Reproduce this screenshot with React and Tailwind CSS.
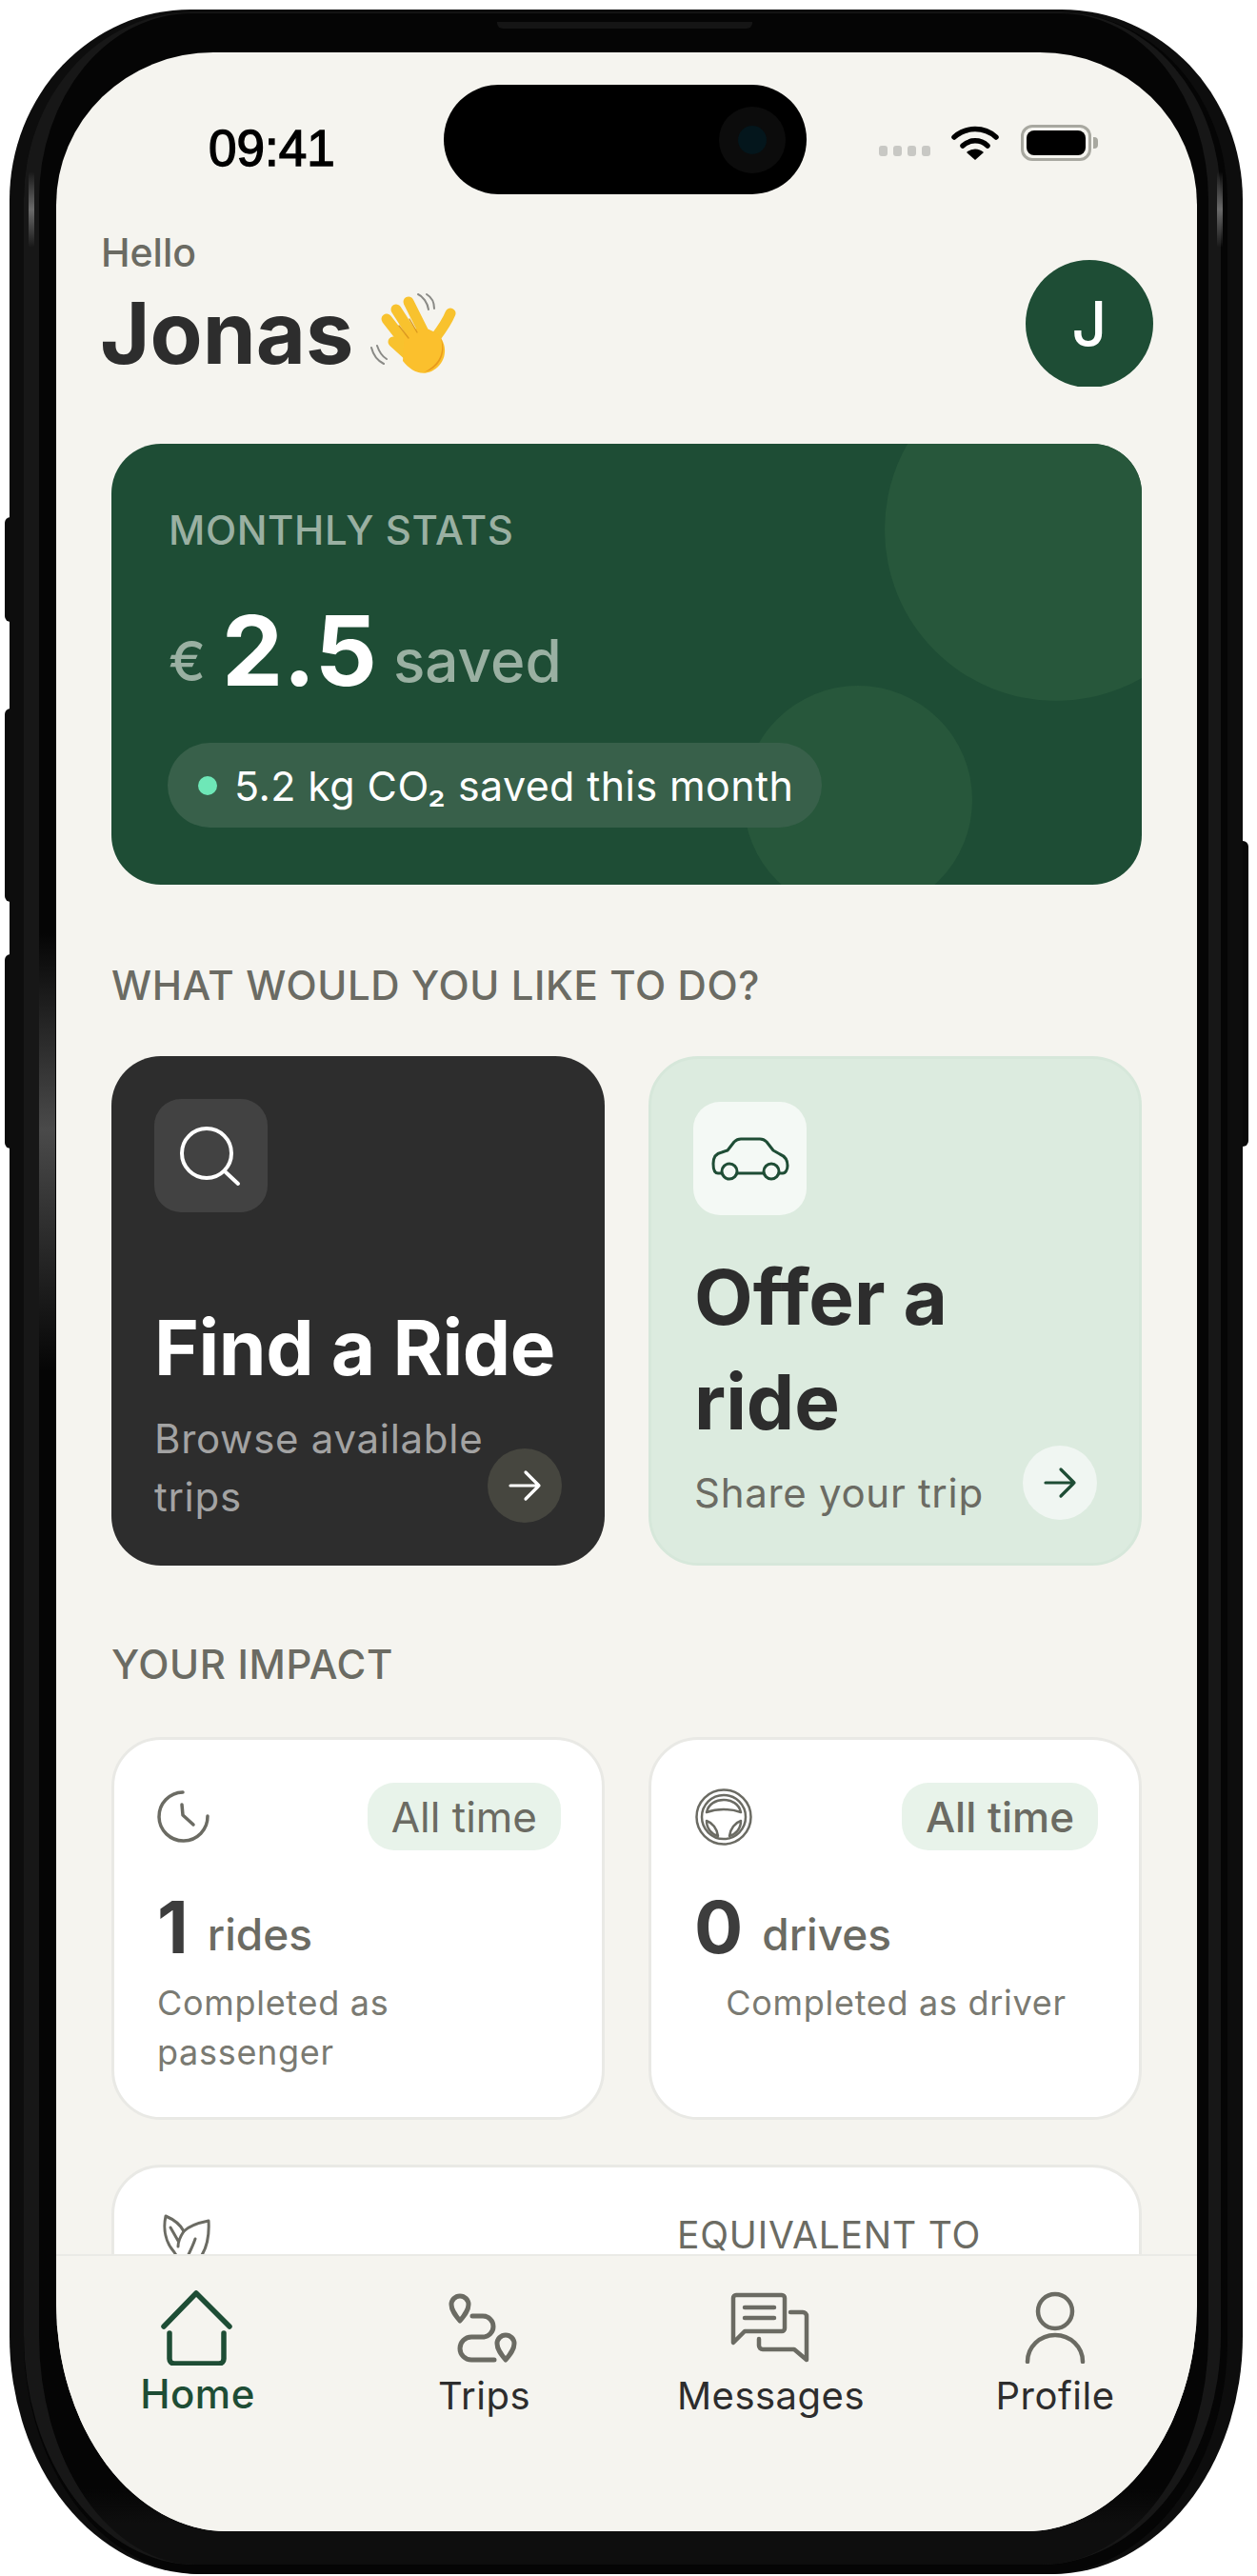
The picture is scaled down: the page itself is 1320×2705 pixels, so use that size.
import React from "react";

const Arrow = ({ color }) => (
  <svg width="78" height="78" viewBox="0 0 78 78" fill="none" stroke={color} strokeWidth="3.2" strokeLinecap="round" strokeLinejoin="round">
    <path d="M24 39H54M40 25L54 39L40 53" />
  </svg>
);

const Hand = () => (
  <svg width="90" height="90" viewBox="0 0 90 90" fill="none" strokeLinecap="round" className="ml-[18px] shrink-0">
    <path d="M50 4C55 6 60 13 61 20M59 4C64 7 67 13 67 19" stroke="#8a8a86" strokeWidth="2" />
    <path d="M1 60C3 68 8 74 14 77M7 58C9 64 12 69 17 72" stroke="#8a8a86" strokeWidth="2" />
    <g stroke="#f8c22e" strokeWidth="11">
      <path d="M17 30L42 62" />
      <path d="M27 20L50 56" />
      <path d="M40 12L60 52" />
      <path d="M24 54L46 74" />
      <path d="M84 24C80 34 74 42 68 50" />
    </g>
    <path d="M36 46C48 36 64 38 74 50C82 62 78 78 64 85C52 90 42 84 34 74Z" fill="#fbc02d" />
    <path d="M62 84C74 78 80 64 74 50C78 66 72 78 56 86Z" fill="#e99a1c" />
    <path d="M30 37L40 50M41 30L49 44" stroke="#dc9a1e" strokeWidth="1.4" />
  </svg>
);

const Section = ({ children }) => (
  <div className="text-[42px] leading-[48px] font-medium tracking-[0.6px] text-[#6b6b63] uppercase">{children}</div>
);

const ImpactCard = ({ icon, num, unit, children, center, strong }) => (
  <div className="h-[402px] rounded-[52px] border-[3px] border-[#e9e9e5] bg-white pl-[45px] pr-[43px] pt-[45px]">
    <div className="flex h-[71px] items-center justify-between">
      {icon}
      <div className={`flex h-[71px] items-center rounded-[28px] bg-[#e8f3ea] px-[25px] text-[44px] leading-[48px] text-[#6b6b63] ${strong ? "font-medium" : ""}`}>All time</div>
    </div>
    <div className="mt-[42px] flex items-end gap-[20px]">
      <span className="text-[76px] leading-[76px] font-bold text-[#3d3d3d]">{num}</span>
      <span className="text-[46px] leading-[60px] font-medium text-[#6b6b63]">{unit}</span>
    </div>
    <div className={`mt-[16px] text-[36px] leading-[52px] tracking-[0.7px] text-[#7a7a72] ${center ? "text-center" : ""}`}>{children}</div>
  </div>
);

const NavItem = ({ label, active, children }) => (
  <div className="flex flex-col items-center">
    <div className="flex h-[80px] items-center justify-center">{children}</div>
    <div className={active ? "mt-[6px] text-[42px] leading-[48px] font-medium tracking-[0.5px] text-[#1e4d35]" : "mt-[8px] text-[40px] leading-[48px] tracking-[0.5px] text-[#2d2d2d]"}>{label}</div>
  </div>
);

export default function App() {
  return (
    <div className="relative h-[2705px] w-[1320px] overflow-hidden bg-white font-[Inter,sans-serif]">
      <div className="absolute left-[5px] top-[543px] h-[110px] w-[12px] rounded-l-[6px] bg-[#0a0a0a]" />
      <div className="absolute left-[5px] top-[744px] h-[203px] w-[12px] rounded-l-[6px] bg-[#0a0a0a]" />
      <div className="absolute left-[5px] top-[1002px] h-[204px] w-[12px] rounded-l-[6px] bg-[#0a0a0a]" />
      <div className="absolute left-[1300px] top-[883px] h-[321px] w-[11px] rounded-r-[6px] bg-[#0a0a0a]" />

      <div className="relative ml-[10px] mt-[10px] h-[2693px] w-[1295px] rounded-[190px_190px_200px_200px/200px_200px_250px_250px] bg-[#0d0d0d] pl-[15px] pr-[16px] pt-[3px]">
        <div className="h-full w-full rounded-[178px_176px_190px_188px/197px_197px_246px_246px] bg-[#050505] pb-[10px] pr-[7px]">
          <div className="h-full w-full rounded-[176px_168px_190px_180px/196px_196px_240px_240px] bg-[#171717] pl-[16px] pr-[13px] pt-[1px]">
            <div className="h-full w-full rounded-[160px_155px_175px_165px/195px_195px_240px_240px] bg-[linear-gradient(#050505_97%,#0e0e0e_98.4%)] pb-[35px] pl-[18px] pr-[12px] pt-[41px]">
              <div className="relative flex h-full w-full flex-col overflow-hidden rounded-[165px_165px_180px_180px/160px_160px_240px_240px] bg-[#f5f4ef]">
                <div className="absolute left-[407px] top-[34px] flex h-[115px] w-[381px] items-center justify-end rounded-[58px] bg-black pr-[22px]">
                  <div className="flex h-[70px] w-[70px] items-center justify-center rounded-full bg-[#0c0c0c]">
                    <div className="h-[30px] w-[30px] rounded-full bg-[#04161c]" />
                  </div>
                </div>

                {/* status bar */}
                <div className="flex h-[185px] shrink-0 items-start justify-between pl-[160px] pr-[104px] pt-[76px]">
                  <div className="font-['Liberation_Sans',sans-serif] text-[53px] leading-[50px] text-black [-webkit-text-stroke:1.4px_black]">09:41</div>
                  <div className="flex items-end">
                    <div className="mb-[5px] flex gap-[6px]">
                      <div className="h-[11px] w-[9px] rounded-[3px] bg-[#c8c8c4]" />
                      <div className="h-[11px] w-[9px] rounded-[3px] bg-[#c8c8c4]" />
                      <div className="h-[11px] w-[9px] rounded-[3px] bg-[#c8c8c4]" />
                      <div className="h-[11px] w-[9px] rounded-[3px] bg-[#c8c8c4]" />
                    </div>
                    <svg width="50" height="38" viewBox="0 0 50 38" className="ml-[22px]" fill="none" stroke="black" strokeWidth="5.5" strokeLinecap="round">
                      <path d="M3 13A33 33 0 0 1 47 13" />
                      <path d="M12 22A19 19 0 0 1 38 22" />
                      <path d="M25 37L16 29A13 13 0 0 1 34 29Z" fill="black" stroke="none" />
                    </svg>
                    <div className="ml-[23px] flex h-[38px] w-[74px] items-center justify-center rounded-[12px] border-[3px] border-[#a8a8a0]">
                      <div className="h-[26px] w-[62px] rounded-[8px] bg-black" />
                    </div>
                    <div className="mb-[13px] ml-[2px] h-[12px] w-[5px] rounded-r-[4px] bg-[#a8a8a0]" />
                  </div>
                </div>

                {/* header */}
                <div className="flex h-[166px] shrink-0 items-start justify-between pl-[46px] pr-[46px]">
                  <div>
                    <div className="ml-[1px] mt-[1px] text-[41px] leading-[48px] font-medium text-[#6b6b63]">Hello</div>
                    <div className="mt-[16px] flex items-center">
                      <span className="text-[90px] leading-[88px] font-bold text-[#2d2d2d]">Jonas</span>
                      <Hand />
                    </div>
                  </div>
                  <div className="mt-[33px] h-[133px] w-[134px] overflow-hidden">
                    <div className="flex h-[134px] w-[134px] items-center justify-center rounded-full bg-[#1e4d35] text-[64px] font-medium text-white">J</div>
                  </div>
                </div>

                {/* main */}
                <div className="min-h-0 flex-1 overflow-hidden px-[58px] pt-[60px]">
                  <div className="relative h-[463px] overflow-hidden rounded-[52px] bg-[#1e4d35] pl-[60px] pt-[67px]">
                    <div className="absolute left-[812px] top-[-90px] h-[360px] w-[360px] rounded-full bg-[#27573b]" />
                    <div className="absolute left-[664px] top-[254px] h-[240px] w-[240px] rounded-full bg-[#27573b]" />
                    <div className="relative text-[42px] leading-[48px] font-medium tracking-[0.6px] text-[#9ab0a2]">MONTHLY STATS</div>
                    <div className="relative mt-[52px] flex items-end">
                      <span className="text-[58px] leading-[78px] font-medium text-[#9ab0a2]">€</span>
                      <span className="ml-[17px] text-[102px] leading-[100px] font-bold text-white">2.5</span>
                      <span className="ml-[17px] text-[62px] leading-[78px] font-medium text-[#9ab0a2]">saved</span>
                    </div>
                    <div className="relative -ml-[1px] mt-[47px] inline-flex h-[89px] items-center rounded-full bg-[#38604a] pl-[32px] pr-[30px]">
                      <div className="h-[20px] w-[20px] rounded-full bg-[#6ee7b7]" />
                      <span className="ml-[18px] text-[43px] leading-[48px] tracking-[0.4px] text-white">5.2 kg CO₂ saved this month</span>
                    </div>
                  </div>

                  <div className="mt-[82px]">
                    <Section>What would you like to do?</Section>
                  </div>

                  <div className="mt-[50px] grid grid-cols-2 gap-[46px]">
                    <div className="relative flex h-[535px] flex-col rounded-[52px] bg-[#2d2d2d] pb-[42px] pl-[45px] pt-[45px]">
                      <div className="h-[119px] w-[119px] rounded-[28px] bg-[#424242]">
                        <svg width="119" height="119" viewBox="0 0 119 119" fill="none" stroke="white" strokeWidth="4" strokeLinecap="round">
                          <circle cx="55" cy="57" r="26" />
                          <path d="M74 76L88 89" />
                        </svg>
                      </div>
                      <div className="mt-auto whitespace-nowrap text-[80px] leading-[110px] font-bold tracking-[-0.4px] text-white">Find a Ride</div>
                      <div className="mt-[10px] text-[42px] leading-[61px] tracking-[0.7px] text-[#a3a3a3]">Browse available<br />trips</div>
                      <div className="absolute bottom-[45px] right-[45px] h-[78px] w-[78px] rounded-full bg-[#46463f]">
                        <Arrow color="white" />
                      </div>
                    </div>
                    <div className="relative flex h-[535px] flex-col rounded-[52px] border-[3px] border-[#d6e7da] bg-[#dcebdf] pb-[43px] pl-[44px] pt-[45px]">
                      <div className="h-[119px] w-[119px] rounded-[28px] bg-[#f4f9f5]">
                        <svg width="119" height="119" viewBox="0 0 119 119" fill="none" stroke="#1e4d35" strokeWidth="3" strokeLinecap="round" strokeLinejoin="round">
                          <path d="M30 75H26C22 75 21 71 21 65C21 58 24 54 30 53L36 51L43 42C45 40 47 39 50 39H70C73 39 75 40 77 42L84 51L91 55C96 57 99 61 99 67C99 71 97 75 94 75H90" />
                          <path d="M46 75H74" />
                          <circle cx="38" cy="73" r="8" />
                          <circle cx="82" cy="73" r="8" />
                        </svg>
                      </div>
                      <div className="ml-[1px] mt-auto text-[80px] leading-[110px] font-bold text-[#2d2d2d]">Offer a<br />ride</div>
                      <div className="ml-[1px] mt-[10px] text-[42px] leading-[61px] tracking-[0.7px] text-[#6b6b63]">Share your trip</div>
                      <div className="absolute bottom-[45px] right-[44px] h-[78px] w-[78px] rounded-full bg-[#f0f6f2]">
                        <Arrow color="#1e4d35" />
                      </div>
                    </div>
                  </div>

                  <div className="mt-[80px]">
                    <Section>Your impact</Section>
                  </div>

                  <div className="mt-[52px] grid grid-cols-2 gap-[46px]">
                    <ImpactCard
                      num="1"
                      unit="rides"
                      icon={
                        <svg width="56" height="56" viewBox="0 0 56 56" fill="none" stroke="#6b6b63" strokeWidth="3.5" strokeLinecap="round" strokeLinejoin="round">
                          <path d="M27 2A25.5 25.5 0 1 0 53 27" />
                          <path d="M26 15L27 26L38 36" />
                        </svg>
                      }
                    >
                      Completed as<br />passenger
                    </ImpactCard>
                    <ImpactCard
                      num="0"
                      unit="drives"
                      center
                      strong
                      icon={
                        <svg width="62" height="60" viewBox="0 0 62 60" fill="none" stroke="#6b6b63" strokeWidth="2.5" strokeLinejoin="round">
                          <circle cx="31" cy="30" r="28.5" />
                          <circle cx="31" cy="30" r="23" />
                          <path d="M13 25C15 16 23 12 31 12C39 12 47 16 49 25C38 21 24 21 13 25Z" />
                          <path d="M13 34C19 36 24 42 25 50C18 48 13 42 13 34Z" />
                          <path d="M49 34C43 36 38 42 37 50C44 48 49 42 49 34Z" />
                        </svg>
                      }
                    >
                      Completed as driver
                    </ImpactCard>
                  </div>

                  <div className="mt-[47px] flex h-[240px] items-start rounded-[52px] border-[3px] border-[#e9e9e5] bg-white pl-[49px] pt-[47px]">
                    <svg width="56" height="70" viewBox="0 0 56 70" fill="none" stroke="#6b6b63" strokeWidth="3" strokeLinejoin="round" strokeLinecap="round" className="shrink-0">
                      <path d="M5 4C2 18 5 32 14 42C18 48 22 56 24 62C38 54 52 42 50 9C40 11 30 14 24 20C20 12 12 7 5 4Z" />
                      <path d="M36 28C32 40 26 50 20 62" />
                      <path d="M24 20C20 26 18 30 18 36M10 16L18 30" />
                    </svg>
                    <div className="ml-[486px] text-[39px] leading-[48px] tracking-[0.8px] text-[#6b6b63]">EQUIVALENT TO</div>
                  </div>
                </div>

                {/* nav */}
                <div className="-ml-[2px] grid h-[291px] shrink-0 grid-cols-[301px_301px_301px_296px] border-t-2 border-[#eaeae6] bg-[#f5f4ef] pt-[35px]">
                  <NavItem label="Home" active>
                    <svg width="80" height="80" viewBox="2 -1 80 80" fill="none" stroke="#1e4d35" strokeWidth="5.5" strokeLinecap="round" strokeLinejoin="round">
                      <path d="M6 38L40 3L75 38" />
                      <path d="M12 45V72A5 5 0 0 0 17 77H64A5 5 0 0 0 69 72V45" />
                    </svg>
                  </NavItem>
                  <NavItem label="Trips">
                    <svg width="76" height="76" viewBox="2 0 76 76" fill="none" stroke="#6b6b63" strokeWidth="5" strokeLinecap="round" strokeLinejoin="round">
                      <path d="M14 31C9 25 5 20 5 14A9 9 0 0 1 23 14C23 20 19 25 14 31Z" />
                      <path d="M27 26H38A11 11 0 0 1 38 48H26A12 12 0 0 0 26 72H50" />
                      <path d="M62 72C57 66 53 61 53 55A9 9 0 0 1 71 55C71 61 67 66 62 72Z" />
                    </svg>
                  </NavItem>
                  <NavItem label="Messages">
                    <svg width="86" height="76" viewBox="3 0 86 76" fill="none" stroke="#6b6b63" strokeWidth="4.5" strokeLinecap="round" strokeLinejoin="round">
                      <path d="M9 4H57A3 3 0 0 1 60 7V39A3 3 0 0 1 57 42H18L6 54V7A3 3 0 0 1 9 4Z" />
                      <path d="M18 17H49M18 28H49" />
                      <path d="M66 22H79A4 4 0 0 1 83 26V72L70 61H37A4 4 0 0 1 33 57V50" />
                    </svg>
                  </NavItem>
                  <NavItem label="Profile">
                    <svg width="70" height="76" viewBox="0 0 70 76" fill="none" stroke="#6b6b63" strokeWidth="4.5" strokeLinecap="round">
                      <circle cx="35" cy="21" r="18" />
                      <path d="M6 74A29 28 0 0 1 64 74" />
                    </svg>
                  </NavItem>
                </div>
              </div>
            </div>
          </div>
        </div>

        <div className="absolute left-[512px] top-[13px] h-[7px] w-[268px] rounded-b-[6px] bg-[#151515]" />
        <div className="absolute left-[20px] top-[170px] h-[80px] w-[6px] rounded-full bg-gradient-to-b from-transparent via-[#6a6a6a] to-transparent" />
        <div className="absolute left-[1268px] top-[170px] h-[80px] w-[6px] rounded-full bg-gradient-to-b from-transparent via-[#6a6a6a] to-transparent" />
        <div className="absolute left-[31px] top-[970px] h-[460px] w-[17px] bg-[linear-gradient(transparent,#4a4a4a_45%,transparent)]" />
      </div>
    </div>
  );
}
